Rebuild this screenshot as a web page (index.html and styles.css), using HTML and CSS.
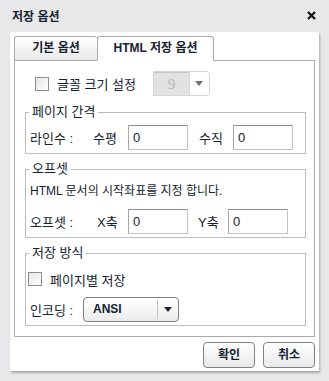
FILE: index.html
```html
<!doctype html>
<html lang="ko">
<head>
    <meta charset="UTF-8">
    <title>저장 옵션</title>
    <link rel="stylesheet" href="styles.css">
</head>
<body>
<div class="dialog">
    <div class="titlebar">
        <span class="title">저장 옵션</span>
        <svg class="close" width="9" height="9" viewBox="0 0 9 9">
            <path d="M1 1L8 8M8 1L1 8" stroke="#111" stroke-width="2.2"/>
        </svg>
    </div>
    <div class="panel">
        <div class="tabs">
            <div class="tab">기본 옵션</div>
            <div class="tab cur">HTML 저장 옵션</div>
            <div class="tab_fill"></div>
        </div>
        <div class="content">
            <div class="font_row">
                <span class="check"></span>
                <span class="font_label">글꼴 크기 설정</span>
                <div class="size_sel">
                    <span class="size_val">9</span>
                    <span class="size_btn"><i class="arrow"></i></span>
                </div>
            </div>

            <fieldset class="group">
                <legend>페이지 간격</legend>
                <div class="row">
                    <span class="lbl w63">라인수 :</span>
                    <span class="lbl w35">수평</span>
                    <span class="txt">0</span>
                    <span class="lbl w34 ml11">수직</span>
                    <span class="txt">0</span>
                </div>
            </fieldset>

            <fieldset class="group">
                <legend>오프셋</legend>
                <div class="desc">HTML 문서의 시작좌표를 지정 합니다.</div>
                <div class="row">
                    <span class="lbl w67">오프셋 :</span>
                    <span class="lbl w31">X축</span>
                    <span class="txt">0</span>
                    <span class="lbl w30 ml10">Y축</span>
                    <span class="txt">0</span>
                </div>
            </fieldset>

            <fieldset class="group">
                <legend>저장 방식</legend>
                <div class="page_row">
                    <span class="check"></span>
                    <span>페이지별 저장</span>
                </div>
                <div class="enc_row">
                    <span class="lbl w53">인코딩 :</span>
                    <div class="enc_sel">
                        <span class="enc_val">ANSI</span>
                        <span class="enc_btn"><i class="arrow dark"></i></span>
                    </div>
                </div>
            </fieldset>
        </div>
        <div class="buttons">
            <div class="btn">확인</div>
            <div class="btn">취소</div>
        </div>
    </div>
</div>
</body>
</html>
```

FILE: styles.css
```css
* {
    margin: 0;
    padding: 0;
    box-sizing: border-box;
}

body {
    width: 329px;
    height: 381px;
    font-family: "Liberation Sans", "Noto Sans CJK KR", sans-serif;
    font-size: 12px;
    color: #14222e;
    background: #e8e8ea repeating-conic-gradient(#e4e4e6 0 25%, #ececee 0 50%) 0 0 / 2px 2px;
}

.titlebar {
    height: 32px;
    padding: 0 13px 2px 12px;
    display: flex;
    align-items: center;
    justify-content: space-between;
}

.title {
    font-weight: bold;
    font-size: 12px;
}

.panel {
    margin-left: 10px;
    width: 309px;
    background: #fff;
    padding: 4px 4px 3px 4px;
    box-shadow: 1px 2px 2px rgba(0, 0, 0, .28);
}

/* 탭 */
.tabs {
    display: flex;
    height: 25px;
}

.tab {
    height: 25px;
    line-height: 23px;
    text-align: center;
    font-weight: bold;
    border: 1px solid #a9adb0;
    border-radius: 3px 3px 0 0;
    background: linear-gradient(#ffffff, #e9e9e9);
}

.tab:first-child {
    width: 83px;
    border-right: none;
}

.tab.cur {
    width: 117px;
    background: #fff;
    border-bottom-color: #fff;
}

.tab_fill {
    flex: 1;
    border-bottom: 1px solid #a9adb0;
}

.content {
    width: 301px;
    border: 1px solid #a9adb0;
    border-top: none;
    padding: 10px 8px 10px 10px;
}

.font_row {
    display: flex;
    align-items: center;
    height: 25px;
    padding-left: 10px;
}

.check {
    width: 14px;
    height: 14px;
    border: 1px solid #8d8d8d;
    background: linear-gradient(135deg, #e6e6e6, #ffffff);
    margin-right: 8px;
}

.font_label {
    font-size: 13px;
}

.size_sel {
    display: flex;
    width: 57px;
    height: 25px;
    margin-left: 17px;
    border: 1px solid #d4d4d4;
    border-radius: 0 4px 4px 0;
}

.size_val {
    width: 35px;
    background: #e2e2e2;
    color: #b5b5b5;
    font-family: "Liberation Serif", serif;
    font-size: 15px;
    line-height: 23px;
    text-align: center;
    border-top: 1px solid #c8c8c8;
}

.size_btn {
    flex: 1;
    display: flex;
    align-items: center;
    justify-content: center;
    border-left: 1px solid #d4d4d4;
    background: #fff;
    border-radius: 0 4px 4px 0;
}

.arrow {
    width: 0;
    height: 0;
    border-left: 4px solid transparent;
    border-right: 4px solid transparent;
    border-top: 5px solid #6b7075;
}

.arrow.dark {
    border-top-color: #1b2430;
}

/* 그룹 */
.group {
    width: 281px;
    border: 1px solid #b9bcbe;
    padding: 5px 4px 3px 4px;
    margin-top: 7px;
}

.font_row + .group {
    margin-top: 8px;
}

.group legend {
    font-size: 13px;
    line-height: 16px;
    padding: 0 3px;
    margin-left: -1px;
}

.row {
    display: flex;
    align-items: center;
    height: 25px;
}

.lbl {
    font-size: 13px;
    flex-shrink: 0;
}

.w63 { width: 63px; }
.w35 { width: 35px; }
.w34 { width: 34px; }
.w67 { width: 67px; }
.w31 { width: 31px; }
.w30 { width: 30px; }
.w53 { width: 53px; }
.ml11 { margin-left: 11px; }
.ml10 { margin-left: 10px; }

.txt {
    width: 60px;
    height: 25px;
    line-height: 23px;
    padding-left: 4px;
    font-size: 13px;
    border: 1px solid #c3c3c3;
    border-top-color: #8e8e8e;
    border-left-color: #a8a8a8;
}

.desc {
    font-size: 12px;
    line-height: 22px;
    margin-top: -2px;
    margin-bottom: 7px;
}

.page_row {
    display: flex;
    align-items: center;
    height: 26px;
    font-size: 13px;
    margin-left: -2px;
}

.enc_row {
    display: flex;
    align-items: center;
    margin-top: 5px;
}

.enc_sel {
    display: flex;
    width: 96px;
    height: 25px;
    border: 1px solid #7d8084;
    border-radius: 4px;
    background: linear-gradient(#ffffff, #ececec);
}

.enc_val {
    width: 74px;
    padding-left: 9px;
    font-weight: bold;
    font-size: 12px;
    border-right: 1px solid #c4c4c4;
    margin: 2px 0;
    line-height: 19px;
}

.enc_btn {
    flex: 1;
    display: flex;
    align-items: center;
    justify-content: center;
}

/* 버튼 */
.buttons {
    display: flex;
    justify-content: flex-end;
    gap: 8px;
    margin-top: 5px;
}

.btn {
    width: 52px;
    height: 26px;
    line-height: 24px;
    text-align: center;
    font-weight: bold;
    border: 1px solid #7d8084;
    border-radius: 4px;
    background: linear-gradient(#ffffff, #e9e9e9);
}
```
